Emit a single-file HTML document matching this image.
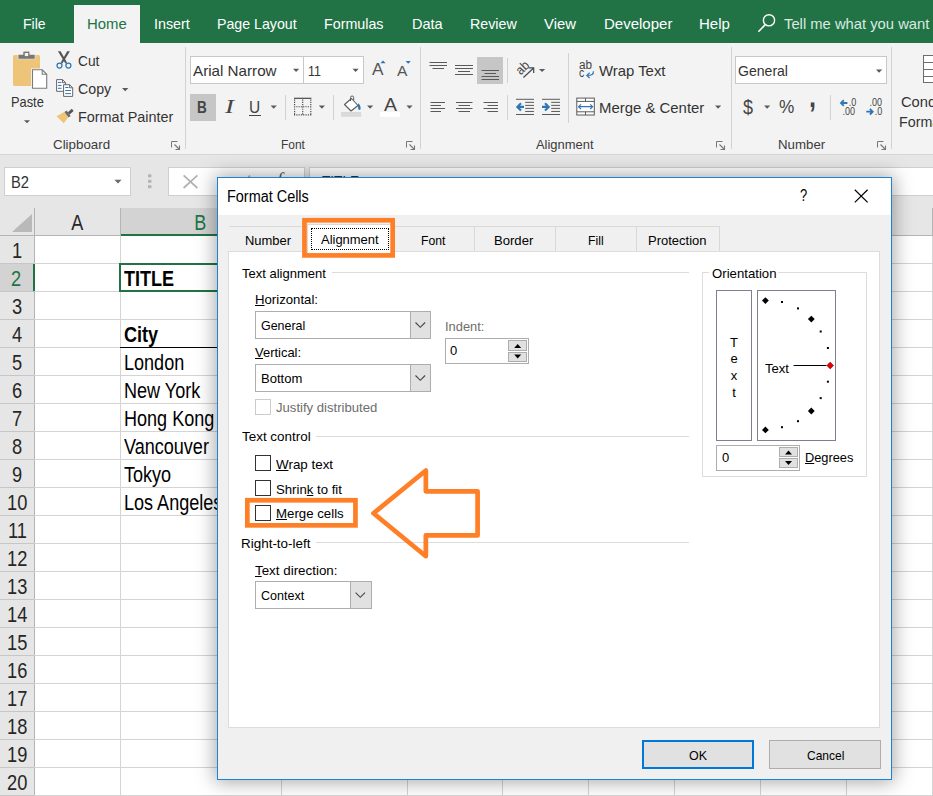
<!DOCTYPE html>
<html>
<head>
<meta charset="utf-8">
<title>Format Cells</title>
<style>
html,body{margin:0;padding:0;}
body{width:933px;height:796px;position:relative;overflow:hidden;background:#fff;font-family:"Liberation Sans",sans-serif;color:#262626;}
.abs{position:absolute;}
.t{position:absolute;white-space:nowrap;line-height:1;}
svg{position:absolute;overflow:visible;}
/* top bar */
#topbar{left:0;top:0;width:933px;height:43px;background:#217346;}
#hometab{left:74px;top:5px;width:66px;height:38px;background:#f3f3f3;}
.tab{color:#fff;font-size:15px;top:16px;}
/* ribbon */
#ribbon{left:0;top:43px;width:933px;height:111px;background:#f3f3f3;border-bottom:1px solid #d6d6d6;}
.rt{font-size:15px;color:#333;}
.gl{font-size:13px;color:#3b3b3b;}
.vsep{width:1px;background:#d2d2d2;}
/* formula bar */
#fbar{left:0;top:155px;width:933px;height:53px;background:#e6e6e6;}
.wbox{background:#fff;border:1px solid #d0d0d0;box-sizing:border-box;}
/* grid */
#grid{left:0;top:208px;width:933px;height:588px;background:#fff;}
.rh{left:0;width:34px;height:27px;background:#e6e6e6;border-right:1px solid #b4b4b4;border-bottom:1px solid #c6c6c6;text-align:center;font-size:22px;line-height:29px;color:#262626;}
.rh span{display:inline-block;transform:scaleX(.83);}.ch span{display:inline-block;transform:scaleX(.82);}
.ch{top:208px;height:27px;background:#e6e6e6;border-right:1px solid #b4b4b4;border-bottom:1px solid #b4b4b4;text-align:center;font-size:22px;line-height:29px;color:#262626;}
.hl{height:1px;background:#d4d4d4;left:34px;width:899px;}
.vl{width:1px;background:#d4d4d4;top:236px;height:560px;}
.cell{font-size:22px;color:#000;}
.cell span{display:inline-block;transform:scaleX(.82);transform-origin:0 50%;}
/* dialog */
#dlg{left:217px;top:177px;width:675px;height:603px;background:#f0f0f0;border:1px solid #1883d7;box-sizing:border-box;box-shadow:0 0 18px 2px rgba(0,0,0,.35);}
#dtitle{left:0;top:0;width:673px;height:36px;background:#fff;}
.dt{font-size:13px;color:#000;}
.u{text-decoration:underline;}
</style>
</head>
<body>
<!-- TOP BAR -->
<div id="topbar" class="abs"></div>
<div id="hometab" class="abs"></div>
<div class="t tab" style="left:23.2px;transform:scaleX(0.9350);transform-origin:0 50%">File</div>
<div class="t tab" style="left:86.6px;color:#217346;transform:scaleX(0.9946);transform-origin:0 50%">Home</div>
<div class="t tab" style="left:154.2px;transform:scaleX(0.9543);transform-origin:0 50%">Insert</div>
<div class="t tab" style="left:217px;transform:scaleX(0.9460);transform-origin:0 50%">Page Layout</div>
<div class="t tab" style="left:324.4px;transform:scaleX(0.9518);transform-origin:0 50%">Formulas</div>
<div class="t tab" style="left:411.6px;transform:scaleX(0.9688);transform-origin:0 50%">Data</div>
<div class="t tab" style="left:470.1px;transform:scaleX(0.9494);transform-origin:0 50%">Review</div>
<div class="t tab" style="left:544.2px;transform:scaleX(0.9891);transform-origin:0 50%">View</div>
<div class="t tab" style="left:603.5px;transform:scaleX(1.0004);transform-origin:0 50%">Developer</div>
<div class="t tab" style="left:699.3px;transform:scaleX(1.0013);transform-origin:0 50%">Help</div>
<svg style="left:755px;top:10px" width="24" height="26" viewBox="755 10 24 26"><circle cx="769" cy="20.3" r="5.6" fill="none" stroke="#fff" stroke-width="1.4"/><path d="M765.2 24.6L758.4 31.8" stroke="#fff" stroke-width="1.6"/></svg>
<div class="t tab" style="left:784.3px;color:#dbe9e0;transform:scaleX(.985);transform-origin:0 50%">Tell me what you want to do</div>
<!-- RIBBON -->
<div id="ribbon" class="abs"></div>
<!-- group separators -->
<div class="abs vsep" style="left:185px;top:47px;height:102px"></div>
<div class="abs vsep" style="left:420px;top:47px;height:102px"></div>
<div class="abs vsep" style="left:731px;top:47px;height:102px"></div>
<div class="abs vsep" style="left:891px;top:47px;height:102px"></div>
<div class="abs vsep" style="left:568px;top:53px;height:70px"></div>

<!-- Clipboard group -->
<svg style="left:0;top:43px" width="190" height="111" viewBox="0 43 190 111">
  <!-- paste -->
  <rect x="13" y="55" width="27" height="31" rx="1.5" fill="#eec578"/>
  <path d="M18 59.2V55.6a1.2 1.2 0 0 1 1.2-1.2H23V52.4a1.2 1.2 0 0 1 1.2-1.2h4.4a1.2 1.2 0 0 1 1.2 1.2V54.4h4.1a1.2 1.2 0 0 1 1.2 1.2V59.2Z" fill="#767676" stroke="#f1e6cf" stroke-width=".8"/>
  <rect x="24.8" y="53" width="3.4" height="3.1" fill="#f3f3f3"/>
  <path d="M31 68.5H43L48 73.5V89.5H31Z" fill="#f3f3f3"/>
  <path d="M32.5 69.8H42.2L46.7 74.3V88.3H32.5Z" fill="#fff" stroke="#7a7a7a" stroke-width="1.1"/>
  <path d="M42.2 69.8V74.3H46.7" fill="none" stroke="#7a7a7a" stroke-width="1.1"/>
  <path d="M24 120.3h6l-3 3z" fill="#5a5a5a"/>
  <!-- cut -->
  <path d="M57.9 51.2L60.6 51.2L67 62.5L65.4 63.5Z" fill="#555"/>
  <path d="M69.9 51.2L67.2 51.2L60.8 62.5L62.4 63.5Z" fill="#555"/>
  <circle cx="59.5" cy="65.5" r="2.5" fill="none" stroke="#2e75b6" stroke-width="1.25"/>
  <circle cx="68.4" cy="65.5" r="2.5" fill="none" stroke="#2e75b6" stroke-width="1.25"/>
  <!-- copy -->
  <path d="M56.6 79.6H62.5L65.6 82.7V91.3H56.6Z" fill="#fff" stroke="#666" stroke-width="1"/>
  <path d="M62.5 79.6V82.7H65.6" fill="none" stroke="#666" stroke-width="1"/>
  <path d="M63.6 84.7H69.6L72.7 87.8V96.4H63.6Z" fill="#fff" stroke="#666" stroke-width="1"/>
  <path d="M69.6 84.7V87.8H72.7" fill="none" stroke="#666" stroke-width="1"/>
  <path d="M57.9 82.4h3.6M57.9 85.4h3.6M57.9 88.3h3.6M65.3 87.5h3.2M65.3 90.5h5.7M65.3 93.6h5.7" stroke="#2e75b6" stroke-width="1" fill="none"/>
  <path d="M122 88h6.4l-3.2 3.2z" fill="#5a5a5a"/>
  <!-- format painter -->
  <path d="M56.5 116.2L65 111.6L68.2 117.6L63.7 123.2Z" fill="#eec578"/>
  <path d="M64.6 111.9L66.6 110.4L70.6 116L68.6 117.5Z" fill="#666"/>
  <path d="M67.9 112.2L71.8 108.7L73.6 110.9L69.6 114.4Z" fill="#555"/>
  <!-- launcher -->
  <path d="M171.5 147.5V141.5H177.5" fill="none" stroke="#777" stroke-width="1"/>
  <path d="M174.5 144.5L179.5 149.5M179.5 145.5V149.5H175.5" fill="none" stroke="#777" stroke-width="1.1"/>
</svg>
<div class="t rt" style="left:10.6px;top:93.8px;transform:scaleX(0.8551);transform-origin:0 50%">Paste</div>
<div class="t rt" style="left:78.4px;top:53.1px;transform:scaleX(0.9167);transform-origin:0 50%">Cut</div>
<div class="t rt" style="left:78.4px;top:81.2px;transform:scaleX(0.9477);transform-origin:0 50%">Copy</div>
<div class="t rt" style="left:78.4px;top:109.1px;transform:scaleX(0.9607);transform-origin:0 50%">Format Painter</div>
<div class="t gl" style="left:52.5px;top:138px;transform:scaleX(1.0259);transform-origin:0 50%">Clipboard</div>

<!-- Font group -->
<div class="abs wbox" style="left:190px;top:56px;width:114px;height:28px;border-color:#c8c8c8"></div>
<div class="abs wbox" style="left:303px;top:56px;width:61px;height:28px;border-color:#c8c8c8"></div>
<div class="t rt" style="left:193.2px;top:63.2px;transform:scaleX(1.0131);transform-origin:0 50%">Arial Narrow</div>
<div class="t rt" style="left:308.4px;top:63.2px;transform:scaleX(0.8281);transform-origin:0 50%">11</div>
<div class="abs" style="left:190px;top:94px;width:26px;height:27px;background:#c6c6c6"></div>
<div class="t" style="left:197.3px;top:98.6px;font-size:17px;font-weight:bold;color:#444;transform:scaleX(0.7980);transform-origin:0 50%">B</div>
<div class="t" style="left:225px;top:97.8px;font-size:18px;font-style:italic;font-family:'Liberation Serif',serif;color:#444;transform:scaleX(1.5000);transform-origin:0 50%">I</div>
<div class="t" style="left:248.8px;top:99.5px;font-size:16px;color:#444;transform:scaleX(0.9686);transform-origin:0 50%">U</div>
<div class="abs" style="left:248.5px;top:114.6px;width:12px;height:1.4px;background:#444"></div>
<div class="t" style="left:372px;top:62px;font-size:16px;color:#555;transform:scaleX(1.0776);transform-origin:0 50%">A</div>
<div class="t" style="left:397px;top:63.8px;font-size:14px;color:#555;transform:scaleX(1.1130);transform-origin:0 50%">A</div>
<div class="t" style="left:383.6px;top:94.8px;font-size:19px;color:#444;transform:scaleX(1.0246);transform-origin:0 50%">A</div>
<svg style="left:185px;top:43px" width="240" height="111" viewBox="185 43 240 111">
  <path d="M293 68.8h6.2l-3.1 3.1z" fill="#5a5a5a"/>
  <path d="M352.5 68.8h6.2l-3.1 3.1z" fill="#5a5a5a"/>
  <path d="M380.4 63.2h5.2l-2.6-2.8z" fill="#2e75b6"/>
  <path d="M405.6 61h5.2l-2.6 2.8z" fill="#2e75b6"/>
  <path d="M270.6 105.6h6.2l-3.1 3.1z" fill="#5a5a5a"/>
  <rect x="285" y="95" width="1" height="25" fill="#d2d2d2"/>
  <rect x="333" y="95" width="1" height="25" fill="#d2d2d2"/>
  <!-- borders icon -->
  <path d="M294 98.3h17.4" stroke="#4a4a4a" stroke-width="1.2"/>
  <g stroke="#4a4a4a" stroke-width="1.15" stroke-dasharray="1.15 1.15" fill="none"><path d="M294.6 99.5v16M310.8 99.5v16M302.7 99.5v16M294 114.8h17.4M294 106.7h17.4"/></g>
  <path d="M318.8 105.6h6.2l-3.1 3.1z" fill="#5a5a5a"/>
  <!-- fill bucket -->
  <path d="M344.5 104.5L351.5 98.5L358 105.5L351 111Z" fill="#fff" stroke="#5a5a5a" stroke-width="1.1" stroke-linejoin="round"/>
  <path d="M350.5 101V97.6a1.6 1.6 0 0 1 3.2 0V100" fill="none" stroke="#5a5a5a" stroke-width="1"/>
  <path d="M358 103.2c1.8 1.2 2.8 3 2.6 5.6c-.2 1.6-2.2 1.6-2.4 0c-.1-1.8-.3-3.6-.2-5.6z" fill="#2e75b6"/>
  <rect x="341" y="112" width="20.2" height="4.8" fill="#d9d9d9"/>
  <path d="M367 105.6h6.2l-3.1 3.1z" fill="#5a5a5a"/>
  <rect x="380" y="112" width="20" height="4.8" fill="#fff"/>
  <path d="M406.4 105.6h6.2l-3.1 3.1z" fill="#5a5a5a"/>
  <!-- launcher -->
  <path d="M406.5 147.5V141.5H412.5" fill="none" stroke="#777" stroke-width="1"/>
  <path d="M409.5 144.5L414.5 149.5M414.5 145.5V149.5H410.5" fill="none" stroke="#777" stroke-width="1.1"/>
</svg>
<div class="t gl" style="left:280.7px;top:137.7px;transform:scaleX(0.9187);transform-origin:0 50%">Font</div>

<!-- Alignment group -->
<div class="abs" style="left:477px;top:57px;width:26px;height:27px;background:#c6c6c6"></div>
<svg style="left:420px;top:43px" width="311" height="111" viewBox="420 43 311 111">
  <g stroke="#5a5a5a" stroke-width="1" fill="none">
    <!-- top align -->
    <path d="M429.5 62.5h17.5M429.5 65.5h17.5M432.5 68.5h11.5"/>
    <!-- middle align -->
    <path d="M455 65.5h18M455 68.5h18M458 71.5h12M455 74.5h18"/>
    <!-- bottom align -->
    <path d="M481.5 70.5h17.5M484.5 73.5h11.5M481.5 76.5h17.5M481.5 79.5h17.5"/>
    <!-- left -->
    <path d="M430.5 102.5h14.5M430.5 105.5h10.5M430.5 108.5h14.5M430.5 111.5h10.5"/>
    <!-- center -->
    <path d="M456 102.5h16.5M458.5 105.5h11.5M456 108.5h16.5M458.5 111.5h11.5"/>
    <!-- right -->
    <path d="M483.5 102.5h14.5M487.5 105.5h10.5M483.5 108.5h14.5M487.5 111.5h10.5"/>
    <!-- indent lines -->
    <path d="M516 99.3h18M525.2 102.35h8.8M525.2 105.4h8.8M525.2 108.4h8.8M525.2 111.45h8.8M516 114.5h18"/>
    <path d="M542 99.3h18M551.2 102.35h8.8M551.2 105.4h8.8M551.2 108.4h8.8M551.2 111.45h8.8M542 114.5h18"/>
  </g>
  <rect x="507" y="58" width="1" height="25" fill="#d2d2d2"/>
  <rect x="507" y="95" width="1" height="25" fill="#d2d2d2"/>
  <!-- indent arrows -->
  <path d="M524 106.9H517.5M521 103.2L517.3 106.9L521 110.6" stroke="#2e75b6" stroke-width="2.1" fill="none"/>
  <path d="M542 106.9H548.5M545 103.2L548.7 106.9L545 110.6" stroke="#2e75b6" stroke-width="2.1" fill="none"/>
  <!-- orientation -->
  <path d="M523.4 77.5L533.4 68.2M528.8 67.9H533.7V72.9" stroke="#4a4a4a" stroke-width="1.2" fill="none"/>
  <path d="M539 68.9h6.2l-3.1 3.1z" fill="#5a5a5a"/>
  <!-- wrap arrow -->
  <path d="M593.4 71.2c.3 3-1.5 4.2-6.4 4.2M589.6 72.8L586.8 75.4L589.6 78" stroke="#2e75b6" stroke-width="1.2" fill="none"/>
  <!-- merge icon -->
  <rect x="576.8" y="98.1" width="17.5" height="16.9" fill="#fff" stroke="#5a5a5a" stroke-width="1"/>
  <path d="M576.8 101.4h17.5M576.8 111.8h17.5M585.5 98.1v3.3M585.5 111.8v3.3" stroke="#5a5a5a" stroke-width="1" fill="none"/>
  <path d="M578.6 106.7h14M581 104.3L578.6 106.7L581 109.1M590.2 104.3L592.6 106.7L590.2 109.1" stroke="#2e75b6" stroke-width="1.2" fill="none"/>
  <path d="M715 105.6h6.2l-3.1 3.1z" fill="#5a5a5a"/>
  <!-- launcher -->
  <path d="M716.5 147.5V141.5H722.5" fill="none" stroke="#777" stroke-width="1"/>
  <path d="M719.5 144.5L724.5 149.5M724.5 145.5V149.5H720.5" fill="none" stroke="#777" stroke-width="1.1"/>
</svg>
<div class="t" style="left:514.5px;top:60.5px;font-size:13px;color:#444;transform:rotate(-45deg) scaleX(.92);transform-origin:50% 50%">ab</div>
<div class="t" style="left:578.7px;top:59.3px;font-size:12px;color:#444;transform:scaleX(0.9806);transform-origin:0 50%">ab</div>
<div class="t" style="left:579px;top:67.4px;font-size:12px;color:#444;transform:scaleX(0.8667);transform-origin:0 50%">c</div>
<div class="t rt" style="left:599.4px;top:62.7px;transform:scaleX(0.9928);transform-origin:0 50%">Wrap Text</div>
<div class="t rt" style="left:599.4px;top:99.8px;transform:scaleX(0.9944);transform-origin:0 50%">Merge &amp; Center</div>
<div class="t gl" style="left:536.3px;top:137.7px;transform:scaleX(0.9946);transform-origin:0 50%">Alignment</div>

<!-- Number group -->
<div class="abs wbox" style="left:735px;top:56px;width:152px;height:28px;border-color:#c8c8c8"></div>
<div class="t rt" style="left:738.3px;top:62.9px;transform:scaleX(0.9368);transform-origin:0 50%">General</div>
<div class="t" style="left:742.8px;top:96.5px;font-size:20px;color:#444;transform:scaleX(0.8989);transform-origin:0 50%">$</div>
<div class="t" style="left:779.3px;top:97px;font-size:19px;color:#444;transform:scaleX(0.9050);transform-origin:0 50%">%</div>
<div class="t" style="left:809px;top:81.5px;font-size:30px;font-weight:bold;color:#444;transform:scaleX(0.8390);transform-origin:0 50%">,</div>
<svg style="left:731px;top:43px" width="202" height="111" viewBox="731 43 202 111">
  <path d="M876 69.6h6.2l-3.1 3.1z" fill="#5a5a5a"/>
  <path d="M764 105.6h6.2l-3.1 3.1z" fill="#5a5a5a"/>
  <rect x="830" y="95" width="1" height="25" fill="#d2d2d2"/>
  <path d="M847.4 103H841M843.8 100.2L841 103L843.8 105.8" stroke="#2e75b6" stroke-width="1.8" fill="none"/>
  <path d="M866.3 111.7H872.7M869.9 108.9L872.7 111.7L869.9 114.5" stroke="#2e75b6" stroke-width="1.8" fill="none"/>
  <!-- launcher -->
  <path d="M877.5 147.5V141.5H883.5" fill="none" stroke="#777" stroke-width="1"/>
  <path d="M880.5 144.5L885.5 149.5M885.5 145.5V149.5H881.5" fill="none" stroke="#777" stroke-width="1.1"/>
  <!-- conditional formatting icon -->
  <rect x="923.5" y="55.5" width="14" height="27" fill="#fff" stroke="#6d6d6d" stroke-width="1"/>
  <path d="M923.5 62.5h10M923.5 69.5h10M923.5 76.5h10" stroke="#6d6d6d" stroke-width="1"/>
</svg>
<div class="t" style="left:847.5px;top:98px;font-size:10px;color:#444;transform:scaleX(.9);transform-origin:100% 50%">.0</div>
<div class="t" style="left:841px;top:106.5px;font-size:10px;color:#444;transform:scaleX(.9);transform-origin:100% 50%">.00</div>
<div class="t" style="left:867.5px;top:98px;font-size:10px;color:#444;transform:scaleX(.9);transform-origin:100% 50%">.00</div>
<div class="t" style="left:873.5px;top:106.5px;font-size:10px;color:#444;transform:scaleX(.9);transform-origin:100% 50%">.0</div>
<div class="t gl" style="left:777.5px;top:137.7px;transform:scaleX(1.0205);transform-origin:0 50%">Number</div>
<div class="t rt" style="left:901.3px;top:93.8px;transform:scaleX(.98);transform-origin:0 50%">Conditional</div>
<div class="t rt" style="left:898.6px;top:113.6px;transform:scaleX(.95);transform-origin:0 50%">Formatting</div>
<!-- FORMULA BAR -->
<div id="fbar" class="abs"></div>
<div class="abs wbox" style="left:4px;top:167px;width:127px;height:29px;border-color:#cfcfcf"></div>
<div class="t" style="left:10.8px;top:173.8px;font-size:17px;color:#333;transform:scaleX(0.8655);transform-origin:0 50%">B2</div>
<svg style="left:110px;top:176px" width="16" height="10" viewBox="110 176 16 10"><path d="M114.4 179.8h7.2l-3.6 3.6z" fill="#6a6a6a"/></svg>
<svg style="left:146px;top:172px" width="8" height="18" viewBox="146 172 8 18"><rect x="148" y="174.3" width="3.4" height="3" fill="#b4b4b4"/><rect x="148" y="179.8" width="3.4" height="3" fill="#b4b4b4"/><rect x="148" y="185.2" width="3.4" height="3" fill="#b4b4b4"/></svg>
<div class="abs wbox" style="left:168px;top:167px;width:137px;height:29px;border-color:#cfcfcf"></div>
<svg style="left:180px;top:172px" width="22" height="20" viewBox="180 172 22 20"><path d="M183.6 175.4L197.4 188M197.4 175.4L183.6 188" stroke="#b2b2b2" stroke-width="1.7" fill="none"/></svg>
<svg style="left:232px;top:172px" width="22" height="20" viewBox="216 172 22 20"><path d="M219 182.5L224 187.5L234 175.5" stroke="#b2b2b2" stroke-width="1.7" fill="none"/></svg>
<div class="t" style="left:277px;top:170px;font-size:19px;font-style:italic;font-family:'Liberation Serif',serif;color:#555">fx</div>
<div class="abs wbox" style="left:309px;top:167px;width:630px;height:29px;border-color:#cfcfcf"></div>
<div class="t" style="left:322px;top:175px;font-size:16px;color:#333;transform:scaleX(0.8494);transform-origin:0 50%">TITLE</div>
<div id="grid" class="abs"></div>
<div class="abs ch" style="left:0;width:34px"></div>
<svg style="left:11.5px;top:213.5px" width="20" height="18"><polygon points="20,0 20,18 0,18" fill="#b9b9b9"/></svg>
<div class="abs ch" style="left:35px;width:85px"><span>A</span></div>
<div class="abs ch" style="left:121px;width:159px;background:#d3d3d3;color:#217346;border-bottom:2px solid #217346;height:26px"><span>B</span></div>
<div class="abs ch" style="left:891px;width:41px;background:#e6e6e6"></div>
<div class="abs rh" style="top:236px"><span>1</span></div>
<div class="abs hl" style="top:263px"></div>
<div class="abs rh" style="top:264px;background:#d3d3d3;color:#217346;border-right:2px solid #217346;width:33px"><span>2</span></div>
<div class="abs hl" style="top:291px"></div>
<div class="abs rh" style="top:292px"><span>3</span></div>
<div class="abs hl" style="top:319px"></div>
<div class="abs rh" style="top:320px"><span>4</span></div>
<div class="abs hl" style="top:347px"></div>
<div class="abs rh" style="top:348px"><span>5</span></div>
<div class="abs hl" style="top:375px"></div>
<div class="abs rh" style="top:376px"><span>6</span></div>
<div class="abs hl" style="top:403px"></div>
<div class="abs rh" style="top:404px"><span>7</span></div>
<div class="abs hl" style="top:431px"></div>
<div class="abs rh" style="top:432px"><span>8</span></div>
<div class="abs hl" style="top:459px"></div>
<div class="abs rh" style="top:460px"><span>9</span></div>
<div class="abs hl" style="top:487px"></div>
<div class="abs rh" style="top:488px"><span>10</span></div>
<div class="abs hl" style="top:515px"></div>
<div class="abs rh" style="top:516px"><span>11</span></div>
<div class="abs hl" style="top:543px"></div>
<div class="abs rh" style="top:544px"><span>12</span></div>
<div class="abs hl" style="top:571px"></div>
<div class="abs rh" style="top:572px"><span>13</span></div>
<div class="abs hl" style="top:599px"></div>
<div class="abs rh" style="top:600px"><span>14</span></div>
<div class="abs hl" style="top:627px"></div>
<div class="abs rh" style="top:628px"><span>15</span></div>
<div class="abs hl" style="top:655px"></div>
<div class="abs rh" style="top:656px"><span>16</span></div>
<div class="abs hl" style="top:683px"></div>
<div class="abs rh" style="top:684px"><span>17</span></div>
<div class="abs hl" style="top:711px"></div>
<div class="abs rh" style="top:712px"><span>18</span></div>
<div class="abs hl" style="top:739px"></div>
<div class="abs rh" style="top:740px"><span>19</span></div>
<div class="abs hl" style="top:767px"></div>
<div class="abs rh" style="top:768px"><span>20</span></div>
<div class="abs hl" style="top:795px"></div>
<div class="abs vl" style="left:120px"></div>
<div class="abs vl" style="left:281px"></div>
<div class="abs vl" style="left:407px"></div>
<div class="abs vl" style="left:502px"></div>
<div class="abs vl" style="left:588px"></div>
<div class="abs vl" style="left:674px"></div>
<div class="abs vl" style="left:760px"></div>
<div class="abs vl" style="left:846px"></div>
<div class="abs vl" style="left:932px"></div>
<div class="t cell" style="left:124px;top:268px;font-weight:bold"><span>TITLE</span></div>
<div class="t cell" style="left:124px;top:324px;font-weight:bold"><span>City</span></div>
<div class="t cell" style="left:124px;top:352px"><span>London</span></div>
<div class="t cell" style="left:124px;top:380px"><span>New York</span></div>
<div class="t cell" style="left:124px;top:408px"><span>Hong Kong</span></div>
<div class="t cell" style="left:124px;top:436px"><span>Vancouver</span></div>
<div class="t cell" style="left:124px;top:464px"><span>Tokyo</span></div>
<div class="t cell" style="left:124px;top:492px"><span>Los Angeles</span></div>
<div class="abs" style="left:119px;top:263px;width:164px;height:29px;border:2px solid #217346;box-sizing:border-box"></div>
<div class="abs" style="left:120px;top:347px;width:161px;height:1px;background:#000"></div>
<!-- DIALOG -->
<div id="dlg" class="abs"></div>
<div class="abs" style="left:218px;top:178px;width:673px;height:37px;background:#fff"></div>
<div class="t" style="left:227.2px;top:188.5px;font-size:16px;color:#000;transform:scaleX(0.9020);transform-origin:0 50%">Format Cells</div>
<div class="t" style="left:800.3px;top:188px;font-size:16px;color:#000;transform:scaleX(0.8084);transform-origin:0 50%">?</div>
<svg style="left:852px;top:187px" width="18" height="18" viewBox="852 187 18 18"><path d="M854.8 189.8L867.6 202.4M867.6 189.8L854.8 202.4" stroke="#000" stroke-width="1.2" fill="none"/></svg>

<!-- tab strip -->
<div class="abs" style="left:229px;top:226px;width:491px;height:26px;border:1px solid #d9d9d9;border-bottom:none;border-left:none;box-sizing:border-box;background:#f0f0f0"></div>
<div class="abs" style="left:473.5px;top:226px;width:1px;height:26px;background:#d9d9d9"></div>
<div class="abs" style="left:554.5px;top:226px;width:1px;height:26px;background:#d9d9d9"></div>
<div class="abs" style="left:636px;top:226px;width:1px;height:26px;background:#d9d9d9"></div>
<!-- panel -->
<div class="abs" style="left:227.5px;top:251px;width:652px;height:476.5px;background:#fff;border:1px solid #dcdcdc;box-sizing:border-box"></div>
<!-- selected tab -->
<div class="abs" style="left:307px;top:223.5px;width:84.5px;height:30px;background:#fff;border:1px solid #d9d9d9;border-bottom:none;box-sizing:border-box"></div>
<div class="abs" style="left:310.8px;top:228.3px;width:78px;height:21.5px;border:1px dotted #000;box-sizing:border-box"></div>
<div class="t dt" style="left:244.6px;top:233.8px;transform:scaleX(0.9968);transform-origin:0 50%">Number</div>
<div class="t dt" style="left:321.4px;top:233.2px;transform:scaleX(0.9963);transform-origin:0 50%">Alignment</div>
<div class="t dt" style="left:421.3px;top:233.8px;transform:scaleX(0.9379);transform-origin:0 50%">Font</div>
<div class="t dt" style="left:494px;top:233.8px;transform:scaleX(1.0069);transform-origin:0 50%">Border</div>
<div class="t dt" style="left:587.6px;top:233.8px;transform:scaleX(0.9392);transform-origin:0 50%">Fill</div>
<div class="t dt" style="left:648.3px;top:233.8px;transform:scaleX(0.9992);transform-origin:0 50%">Protection</div>

<!-- Text alignment group -->
<div class="abs" style="left:331.5px;top:272px;width:357px;height:1px;background:#dcdcdc"></div>
<div class="t dt" style="left:241.7px;top:266.5px;transform:scaleX(1.0009);transform-origin:0 50%">Text alignment</div>
<div class="t dt" style="left:255px;top:292.5px;transform:scaleX(1.0138);transform-origin:0 50%"><span class="u">H</span>orizontal:</div>
<div class="abs" style="left:255px;top:311px;width:176px;height:27.5px;background:#fff;border:1px solid #adadad;box-sizing:border-box"></div>
<div class="abs" style="left:409.5px;top:311px;width:21.5px;height:27.5px;background:#e1e1e1;border:1px solid #adadad;box-sizing:border-box"></div>
<svg style="left:409px;top:311px" width="22" height="27" viewBox="409 311 22 27"><path d="M415.5 322.5L420.3 327.3L425.1 322.5" stroke="#444" stroke-width="1.1" fill="none"/></svg>
<div class="t dt" style="left:260.6px;top:318.7px;transform:scaleX(0.9578);transform-origin:0 50%">General</div>
<div class="t dt" style="left:445.2px;top:320px;color:#6d6d6d;transform:scaleX(0.9908);transform-origin:0 50%">Indent:</div>
<div class="abs" style="left:445px;top:338px;width:84px;height:25.7px;background:#fff;border:1px solid #adadad;box-sizing:border-box"></div>
<div class="t dt" style="left:450px;top:343.8px">0</div>
<div class="abs" style="left:508px;top:339.8px;width:19px;height:11.3px;background:#e1e1e1;border:1px solid #adadad;box-sizing:border-box"></div>
<div class="abs" style="left:508px;top:351.6px;width:19px;height:10.8px;background:#e1e1e1;border:1px solid #adadad;box-sizing:border-box"></div>
<svg style="left:508px;top:340px" width="20" height="22" viewBox="508 340 20 22"><path d="M514.2 348h7l-3.5-4z" fill="#000"/><path d="M514.2 354.5h7l-3.5 4z" fill="#000"/></svg>
<div class="t dt" style="left:255px;top:346px;transform:scaleX(0.9964);transform-origin:0 50%"><span class="u">V</span>ertical:</div>
<div class="abs" style="left:255px;top:364px;width:176px;height:27.5px;background:#fff;border:1px solid #adadad;box-sizing:border-box"></div>
<div class="abs" style="left:409.5px;top:364px;width:21.5px;height:27.5px;background:#e1e1e1;border:1px solid #adadad;box-sizing:border-box"></div>
<svg style="left:409px;top:364px" width="22" height="27" viewBox="409 364 22 27"><path d="M415.5 375.5L420.3 380.3L425.1 375.5" stroke="#444" stroke-width="1.1" fill="none"/></svg>
<div class="t dt" style="left:260.6px;top:371.5px;transform:scaleX(1.0027);transform-origin:0 50%">Bottom</div>
<div class="abs" style="left:255px;top:399.3px;width:16px;height:15.5px;background:#fff;border:1.2px solid #cccccc;box-sizing:border-box"></div>
<div class="t dt" style="left:276.4px;top:400.5px;color:#6d6d6d;transform:scaleX(1.0086);transform-origin:0 50%">Justify distributed</div>

<!-- Text control group -->
<div class="abs" style="left:316px;top:436px;width:372.5px;height:1px;background:#dcdcdc"></div>
<div class="t dt" style="left:241.5px;top:430px;transform:scaleX(1.0333);transform-origin:0 50%">Text control</div>
<div class="abs" style="left:255px;top:455.2px;width:16px;height:15.5px;background:#fff;border:1.2px solid #333;box-sizing:border-box"></div>
<div class="t dt" style="left:275.9px;top:457.9px;transform:scaleX(1.0306);transform-origin:0 50%"><span class="u">W</span>rap text</div>
<div class="abs" style="left:255px;top:480px;width:16px;height:15.5px;background:#fff;border:1.2px solid #333;box-sizing:border-box"></div>
<div class="t dt" style="left:275.9px;top:482.6px;transform:scaleX(1.0131);transform-origin:0 50%">Shrin<span class="u">k</span> to fit</div>
<div class="abs" style="left:255px;top:505.1px;width:16px;height:15.5px;background:#fff;border:1.2px solid #333;box-sizing:border-box"></div>
<div class="t dt" style="left:275.9px;top:507.4px;transform:scaleX(1.0183);transform-origin:0 50%"><span class="u">M</span>erge cells</div>

<!-- Right-to-left group -->
<div class="abs" style="left:316px;top:542px;width:372.5px;height:1px;background:#dcdcdc"></div>
<div class="t dt" style="left:240.6px;top:536.8px;transform:scaleX(1.0342);transform-origin:0 50%">Right-to-left</div>
<div class="t dt" style="left:255px;top:563.5px;transform:scaleX(1.0286);transform-origin:0 50%"><span class="u">T</span>ext direction:</div>
<div class="abs" style="left:255px;top:581px;width:116.6px;height:27.5px;background:#fff;border:1px solid #adadad;box-sizing:border-box"></div>
<div class="abs" style="left:349.8px;top:581px;width:21.8px;height:27.5px;background:#e1e1e1;border:1px solid #adadad;box-sizing:border-box"></div>
<svg style="left:350px;top:581px" width="22" height="27" viewBox="350 581 22 27"><path d="M355.6 592.7L360.3 597.3L365 592.7" stroke="#444" stroke-width="1.1" fill="none"/></svg>
<div class="t dt" style="left:260.6px;top:588.7px;transform:scaleX(0.9640);transform-origin:0 50%">Context</div>

<!-- Orientation group -->
<div class="abs" style="left:702px;top:272px;width:165px;height:205px;border:1px solid #dcdcdc;box-sizing:border-box"></div>
<div class="t dt" style="left:708.5px;top:266.8px;background:#fff;padding:0 1px 0 3px;transform:scaleX(1.0134);transform-origin:0 50%">Orientation</div>
<div class="abs" style="left:716px;top:290px;width:36px;height:151px;background:#fff;border:1px solid #7f7f8f;box-sizing:border-box"></div>
<div class="abs" style="left:757px;top:290px;width:79px;height:151px;background:#fff;border:1px solid #7f7f8f;box-sizing:border-box"></div>
<div class="t dt" style="left:730px;top:335.5px;width:8px;text-align:center">T</div>
<div class="t dt" style="left:730px;top:352px;width:8px;text-align:center">e</div>
<div class="t dt" style="left:730px;top:369px;width:8px;text-align:center">x</div>
<div class="t dt" style="left:730px;top:385.5px;width:8px;text-align:center">t</div>
<svg style="left:757px;top:290px" width="79" height="150" viewBox="757 290 79 150">
  <g fill="#000">
    <path d="M765.4 297.2l3.4 3.4l-3.4 3.4l-3.4-3.4z"/>
    <path d="M811.3 315.7l3.4 3.4l-3.4 3.4l-3.4-3.4z"/>
    <path d="M811.3 407.6l3.4 3.4l-3.4 3.4l-3.4-3.4z"/>
    <path d="M765.4 426.5l3.4 3.4l-3.4 3.4l-3.4-3.4z"/>
    <rect x="781" y="301" width="2" height="2"/>
    <rect x="797" y="307.4" width="2" height="2"/>
    <rect x="819.7" y="330.5" width="2" height="2"/>
    <rect x="826.9" y="347" width="2" height="2"/>
    <rect x="826.9" y="380.7" width="2" height="2"/>
    <rect x="819.7" y="397.1" width="2" height="2"/>
    <rect x="797" y="420.2" width="2" height="2"/>
    <rect x="781" y="426.2" width="2" height="2"/>
  </g>
  <path d="M830.2 362.1l3.4 3.4l-3.4 3.4l-3.4-3.4z" fill="#e00000" stroke="#800000" stroke-width=".5"/>
  <path d="M793.6 365.5H826.4" stroke="#000" stroke-width="1"/>
</svg>
<div class="t dt" style="left:765.4px;top:361.5px;transform:scaleX(1.0066);transform-origin:0 50%">Text</div>
<div class="abs" style="left:716px;top:445px;width:84px;height:25.5px;background:#fff;border:1px solid #adadad;box-sizing:border-box"></div>
<div class="t dt" style="left:722px;top:451px">0</div>
<div class="abs" style="left:778.8px;top:447.2px;width:19.5px;height:10.2px;background:#e1e1e1;border:1px solid #adadad;box-sizing:border-box"></div>
<div class="abs" style="left:778.8px;top:458px;width:19.5px;height:10.2px;background:#e1e1e1;border:1px solid #adadad;box-sizing:border-box"></div>
<svg style="left:778px;top:446px" width="21" height="24" viewBox="778 446 21 24"><path d="M785 454.5h7l-3.5-4z" fill="#000"/><path d="M785 461h7l-3.5 4z" fill="#000"/></svg>
<div class="t dt" style="left:805.4px;top:451.4px;transform:scaleX(0.9849);transform-origin:0 50%"><span class="u">D</span>egrees</div>

<!-- buttons -->
<div class="abs" style="left:642px;top:740px;width:112px;height:29px;background:#e1e1e1;border:2px solid #0078d7;box-sizing:border-box"></div>
<div class="t dt" style="left:689.2px;top:748.6px;transform:scaleX(0.9576);transform-origin:0 50%">OK</div>
<div class="abs" style="left:769px;top:740px;width:112px;height:29px;background:#e1e1e1;border:1px solid #adadad;box-sizing:border-box"></div>
<div class="t dt" style="left:806.5px;top:748.6px;transform:scaleX(0.9217);transform-origin:0 50%">Cancel</div>
<!-- ORANGE HIGHLIGHTS -->
<svg style="left:0;top:0" width="933" height="796" viewBox="0 0 933 796">
  <rect x="304.45" y="220.25" width="88.2" height="35.15" fill="none" stroke="#ff7f27" stroke-width="4.7"/>
  <rect x="247.35" y="500.25" width="108.1" height="25.1" fill="none" stroke="#ff7f27" stroke-width="4.7"/>
  <path d="M373.5 513.3L425.85 470.5V491.35H477.6V535.45H425.85V556.25Z" fill="none" stroke="#ff7f27" stroke-width="4.7" stroke-linejoin="round"/>
</svg>
</body>
</html>
